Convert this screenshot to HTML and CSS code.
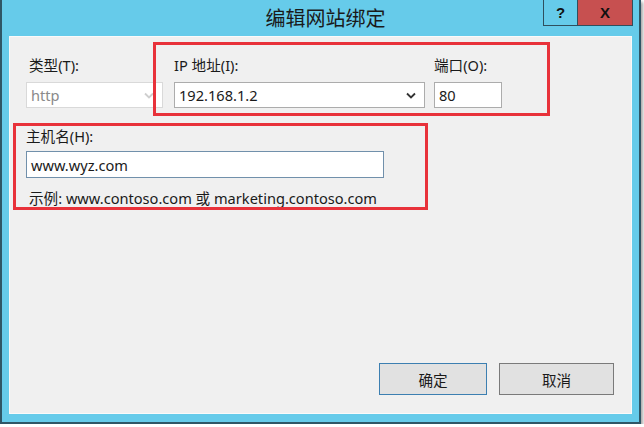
FILE: index.html
```html
<!DOCTYPE html>
<html lang="zh-CN">
  <head>
    <meta charset="UTF-8" />
    <meta name="viewport" content="width=device-width, initial-scale=1.0" />
    <title>编辑网站绑定</title>
    <link rel="stylesheet" href="styles.css">
  </head>
  <body>
    <div class="window">
      <div class="titlebar">
        <span class="title">编辑网站绑定</span>
        <div class="caption-buttons">
          <span class="cap help">?</span>
          <span class="cap close">X</span>
        </div>
      </div>
      <div class="client">
        <div class="row-top">
          <div class="field type">
            <label>类型(T):</label>
            <div class="select disabled">
              <span>http</span>
              <svg class="chevron" width="10" height="7" viewBox="0 0 10 7"><path d="M1 1.5 L5 5.5 L9 1.5" fill="none" stroke="#cfcfcf" stroke-width="1.8"/></svg>
            </div>
          </div>
          <div class="field ip">
            <label>IP 地址(I):</label>
            <div class="select">
              <span>192.168.1.2</span>
              <svg class="chevron" width="10" height="7" viewBox="0 0 10 7"><path d="M1 1.5 L5 5.5 L9 1.5" fill="none" stroke="#333333" stroke-width="1.8"/></svg>
            </div>
          </div>
          <div class="field port">
            <label>端口(O):</label>
            <div class="textbox">80</div>
          </div>
        </div>

        <div class="field host">
          <label>主机名(H):</label>
          <div class="textbox focused">www.wyz.com</div>
        </div>
        <p class="hint">示例: www.contoso.com 或 marketing.contoso.com</p>

        <div class="buttons">
          <button class="btn default">确定</button>
          <button class="btn cancel">取消</button>
        </div>

        <div class="mark mark-ip"></div>
        <div class="mark mark-host"></div>
      </div>
    </div>
  </body>
</html>
```

FILE: styles.css
```css
body {
  margin: 0;
  background: #ffffff;
  font-family: "Noto Sans", "Noto Sans CJK SC", sans-serif;
  font-size: 14.6px;
  color: #1a1a1a;
}

.window {
  box-sizing: border-box;
  width: 641px;
  height: 424px;
  background: #66cbea;
  border-left: 2px solid #2f5666;
  border-right: 2px solid #2f5666;
  border-bottom: 2px solid #2f5666;
  padding: 0 7px 8px 7px;
  box-shadow: 2px 2px 3px rgba(0, 0, 0, 0.35);
  display: flex;
  flex-direction: column;
}

.titlebar {
  height: 36px;
  position: relative;
  display: flex;
  justify-content: center;
  align-items: center;
}

.title {
  font-family: "Noto Sans CJK SC", sans-serif;
  font-size: 20px;
  color: #1a1a1a;
  margin-left: 10px;
  margin-top: -2px;
}

.caption-buttons {
  position: absolute;
  top: 0;
  right: -1px;
  display: flex;
  height: 25px;
  border: 1px solid #2f4f5e;
  border-top: none;
}

.cap {
  display: flex;
  justify-content: center;
  align-items: center;
  font-family: "Liberation Sans", sans-serif;
  font-weight: bold;
  font-size: 15px;
  color: #111111;
}

.cap.help {
  width: 33px;
  background: #66cbea;
  border-right: 1px solid #2f4f5e;
}

.cap.close {
  width: 54px;
  background: #c75050;
}

.client {
  flex: 1;
  position: relative;
  background: #f0f0f0;
  border: 1px solid #fafafa;
  padding: 18px 17px 18px 16px;
  display: flex;
  flex-direction: column;
}

.field label {
  display: block;
  height: 20px;
  line-height: 20px;
}

.row-top {
  display: flex;
}

.row-top .field label {
  margin-bottom: 7px;
}

.field.type {
  width: 137px;
}

.field.type label {
  padding-left: 3px;
}

.field.ip {
  width: 251px;
  margin-left: 11px;
}

.field.port {
  width: 68px;
  margin-left: 9px;
}

.select,
.textbox {
  box-sizing: border-box;
  height: 26px;
  background: #ffffff;
  border: 1px solid #acacac;
  display: flex;
  align-items: center;
  padding: 0 4px;
}

.select span {
  flex: 1;
}

.select .chevron {
  margin-right: 4px;
}

.select.disabled {
  border-color: #d9d9d9;
  color: #8a8a8a;
}

.field.host {
  margin-top: 18px;
}

.field.host label {
  margin-bottom: 5px;
}

.textbox.focused {
  width: 358px;
  height: 27px;
  border-color: #7190ab;
}

.hint {
  margin: 10px 0 0 3px;
  line-height: 20px;
}

.buttons {
  margin-top: auto;
  display: flex;
  justify-content: flex-end;
  gap: 12px;
}

.btn {
  height: 32px;
  font-family: "Noto Sans CJK SC", sans-serif;
  font-size: 14.6px;
  color: #1a1a1a;
  background: #e1e1e1;
  border: 1px solid #adadad;
}

.btn.default {
  width: 108px;
  border-color: #3c7fb1;
}

.btn.cancel {
  width: 115px;
  border-color: #7a7a7a;
}

.mark {
  position: absolute;
  box-sizing: border-box;
  border: 3px solid #e8323a;
}

.mark-ip {
  left: 143px;
  top: 5px;
  width: 397px;
  height: 74px;
}

.mark-host {
  left: 3px;
  top: 86px;
  width: 415px;
  height: 87px;
}
```
